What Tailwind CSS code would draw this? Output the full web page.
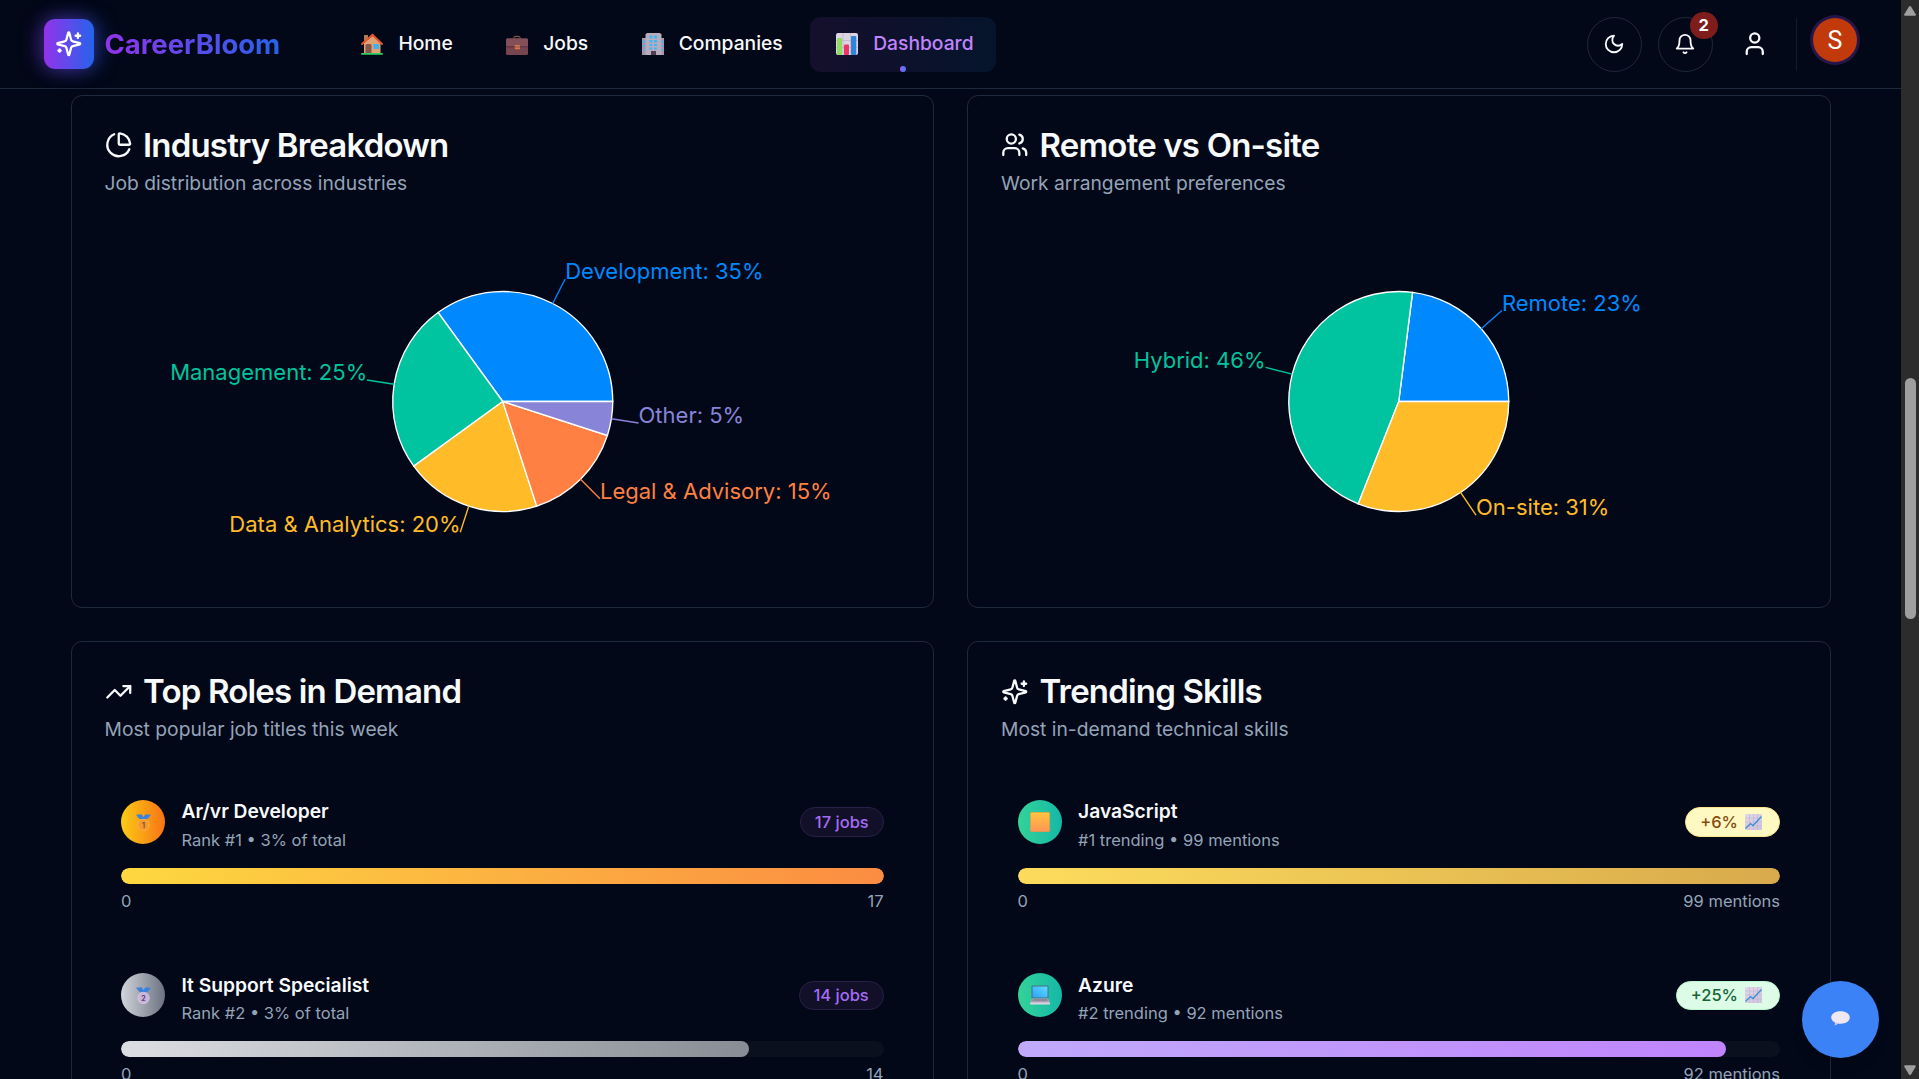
<!DOCTYPE html>
<html lang="en" class="text-[22px]">
<head>
<meta charset="utf-8">
<title>CareerBloom Dashboard</title>
<script src="https://cdn.jsdelivr.net/npm/@tailwindcss/browser@4"></script>
</head>
<body class="flex h-[1079px] w-[1919px] overflow-hidden bg-[#020817] font-['Inter',sans-serif] text-[#f8fafc]">

<svg class="absolute h-0 w-0">
  <defs>
    <symbol id="sparkles" viewBox="0 0 24 24"><path d="M9.937 15.5A2 2 0 0 0 8.5 14.063l-6.135-1.582a.5.5 0 0 1 0-.962L8.5 9.936A2 2 0 0 0 9.937 8.5l1.582-6.135a.5.5 0 0 1 .963 0L14.063 8.5A2 2 0 0 0 15.5 9.937l6.135 1.581a.5.5 0 0 1 0 .964L15.5 14.063a2 2 0 0 0-1.437 1.437l-1.582 6.135a.5.5 0 0 1-.963 0z"/><path d="M20 3v4"/><path d="M22 5h-4"/><path d="M4 17v2"/><path d="M5 18H3"/></symbol>
    <linearGradient id="paper" x1="0" y1="0" x2="1" y2="1"><stop offset="0" stop-color="#e0d9e8"/><stop offset="1" stop-color="#cfc2dc"/></linearGradient>
    <linearGradient id="orange" x1="0" y1="0" x2="0" y2="1"><stop offset="0" stop-color="#ffc63f"/><stop offset="1" stop-color="#ff9455"/></linearGradient>
    <linearGradient id="screen" x1="0" y1="1" x2="1" y2="0"><stop offset="0" stop-color="#2fa0f5"/><stop offset="1" stop-color="#5cdcff"/></linearGradient>
    <symbol id="chart-up" viewBox="0 0 17 16"><rect width="17" height="16" rx="1" fill="url(#paper)"/><path d="M4.500 0v16M8.500 0v16M12.500 0v16M0 4h17M0 8h17M0 12h17" stroke="#bdaecd" stroke-width=".5"/><path d="M.5 14.500 5.500 9.500 8 11.500 16.500 2.500" fill="none" stroke="#3b8fd6" stroke-width="1.300"/></symbol>
  </defs>
</svg>

<div class="flex w-[1901px] flex-col">
  <header class="flex h-[89px] shrink-0 items-center border-b border-[#1e293b] px-8">
    <div class="flex w-[291.4px] items-center gap-2">
      <div class="flex h-9 w-9 items-center justify-center rounded-lg bg-linear-to-r/srgb from-[#9333ea] to-[#2563eb] shadow-[-5px_0_20px_rgba(147,51,234,0.38),5px_0_20px_rgba(37,99,235,0.42)]">
        <svg class="h-5 w-5 fill-none stroke-white stroke-2" stroke-linecap="round" stroke-linejoin="round"><use href="#sparkles"/></svg>
      </div>
      <span class="bg-linear-to-r/srgb from-[#9333ea] to-[#2563eb] bg-clip-text text-xl font-bold text-transparent">CareerBloom</span>
    </div>
    <nav class="flex items-center gap-1 text-sm font-medium">
      <a class="flex h-10 items-center gap-2 px-4">
        <span class="flex w-[30px] justify-center"><svg class="h-[22px] w-[22px]" viewBox="0 0 22 22"><path d="M3 2h4v9H3z" fill="#b07a52"/><path d="M3 10 11.500 3 19.500 10V20.500H3z" fill="#dfa274"/><path d="M4.500 12.500q0-1.500 1.200-1.500h3.600q1.200 0 1.200 1.500V20.500h-6z" fill="#83564e"/><rect x="12.500" y="11" width="5.500" height="5" fill="#3fb2ee"/><path d="M1 11 11.500 1.800 21 11" fill="none" stroke="#e8562f" stroke-width="1.900" stroke-linecap="round"/><rect x="0" y="20" width="22" height="1.800" rx=".8" fill="#2fcf61"/></svg></span>
        <span>Home</span>
      </a>
      <a class="flex h-10 items-center gap-2 px-4">
        <span class="flex w-[30px] justify-center"><svg class="h-[22px] w-[22px]" viewBox="0 0 22 22"><path d="M8 6V4.500Q8 3.300 9.500 3.300h3q1.500 0 1.500 1.200V6" fill="none" stroke="#7d4a3c" stroke-width="1.200"/><rect x="0" y="5.500" width="22" height="16.500" rx="1.500" fill="#76454f"/><path d="M0 6.800Q0 5.500 1.500 5.500h19Q22 5.500 22 6.800V13.500H0z" fill="#83505a"/><path d="M0 13.800h22" stroke="#5a3040"/><rect x="8.800" y="12" width="5.200" height="4.200" rx=".6" fill="#d9774a"/><path d="M8.800 14h5.200" stroke="#76454f" stroke-width=".7"/></svg></span>
        <span>Jobs</span>
      </a>
      <a class="flex h-10 items-center gap-2 px-4">
        <span class="flex w-[30px] justify-center"><svg class="h-[22px] w-[22px]" viewBox="0 0 22 22"><path d="M0 5h4v17H0zM18 5h4v17h-4z" fill="#a597ad"/><path d="M3.500 1.500 5 0h13l1.500 1.500V22h-16z" fill="#b9acbd"/><path d="M1 7h2v3H1zM1 12h2v2H1zM1 16h2v2H1zM19.500 7h1.800v3h-1.800zM19.500 12h1.800v2h-1.800zM19.500 16h1.800v2h-1.800zM7.500 2.500h3v3h-3zM12 2.500h3v3h-3zM7.500 7h3v2.500h-3zM12 7h3v2.500h-3zM7.500 11h3v2h-3zM12 11h3v2h-3zM7.500 14.500h3v2h-3zM12 14.500h3v2h-3z" fill="#3db8f5"/><rect x="9" y="18" width="5" height="4" fill="#4c3d50"/></svg></span>
        <span>Companies</span>
      </a>
      <a class="relative flex h-10 items-center gap-2 rounded-lg bg-linear-to-r/srgb from-[#150f2c] to-[#05142c] px-4 text-[#c084fc]">
        <span class="flex w-[30px] justify-center"><svg class="h-[22px] w-[22px]" viewBox="0 0 22 22"><rect width="22" height="22" rx="2" fill="#ded5e2"/><path d="M7 0v22M14.500 0v22M0 7.500h22M0 14.500h22" stroke="#b9aabf" stroke-width=".6"/><rect x="1" y="5" width="5" height="17" rx="1" fill="#8fdc5e"/><rect x="8" y="11.500" width="5" height="10.500" rx="1" fill="#ea3563"/><rect x="15" y="3" width="5.300" height="19" rx="1" fill="#2d86da"/></svg></span>
        <span>Dashboard</span>
        <span class="absolute bottom-0 left-1/2 h-[6px] w-[6px] -translate-x-1/2 rounded-full bg-linear-to-r/srgb from-[#a855f7] to-[#3b82f6]"></span>
      </a>
    </nav>
    <div class="ml-auto flex items-center">
      <div class="flex h-10 w-10 items-center justify-center rounded-full border border-[#1e293b]">
        <svg class="mr-[1px] h-4 w-4 fill-none stroke-current stroke-2" viewBox="0 0 24 24" stroke-linecap="round" stroke-linejoin="round"><path d="M12 3a6 6 0 0 0 9 9 9 9 0 1 1-9-9Z"/></svg>
      </div>
      <div class="relative ml-[15.5px] flex h-10 w-10 items-center justify-center rounded-full border border-[#1e293b]">
        <svg class="h-4 w-4 fill-none stroke-current stroke-2" viewBox="0 0 24 24" stroke-linecap="round" stroke-linejoin="round"><path d="M6 8a6 6 0 0 1 12 0c0 7 3 9 3 9H3s3-2 3-9"/><path d="M10.300 21a1.940 1.940 0 0 0 3.400 0"/></svg>
        <span class="absolute -top-[6px] -right-[6px] flex h-5 w-5 items-center justify-center rounded-full bg-[#7f1d1d] text-xs font-bold">2</span>
      </div>
      <div class="ml-[14.75px] flex h-10 w-10 items-center justify-center">
        <svg class="h-5 w-5 fill-none stroke-current stroke-2" viewBox="0 0 24 24" stroke-linecap="round" stroke-linejoin="round"><path d="M19 21v-2a4 4 0 0 0-4-4H9a4 4 0 0 0-4 4v2"/><circle cx="12" cy="7" r="4"/></svg>
      </div>
      <div class="ml-2.5 h-[53px] w-px bg-[#131c2e]"></div>
      <div class="mb-[8px] ml-[16px] flex h-8 w-8 items-center justify-center rounded-full bg-[#c2390c] font-['Roboto'] text-[25px] font-normal leading-none text-white ring-[3px] ring-[#25164a]">S</div>
    </div>
  </header>

  <main class="mx-auto grid w-[1760px] grid-cols-2 gap-6 pt-[5.5px]">
    <section class="h-[513.5px] rounded-lg border border-[#1e293b] p-6">
      <h2 class="flex items-center gap-2 text-2xl leading-none font-semibold tracking-tight">
        <svg class="h-5 w-5 fill-none stroke-current stroke-2" viewBox="0 0 24 24" stroke-linecap="round" stroke-linejoin="round"><path d="M21 12c.552 0 1.005-.449.95-.998a10 10 0 0 0-8.953-8.951c-.55-.055-.998.398-.998.950v8a1 1 0 0 0 1 1z"/><path d="M21.210 15.890A10 10 0 1 1 8 2.830"/></svg>
        Industry Breakdown
      </h2>
      <p class="mt-1.5 text-sm text-[#94a3b8]">Job distribution across industries</p>
      <svg class="mt-[32.3px] h-[343px] w-full overflow-visible text-base" viewBox="-397.75 -171.5 795.5 343">
        <g stroke="#fff" stroke-width="1.375">
          <path fill="#0088FE" d="M0 0H110A110 110 0 0 0 -64.660 -88.990Z"/>
          <path fill="#00C49F" d="M0 0-64.660-88.990A110 110 0 0 0-88.990 64.660Z"/>
          <path fill="#FFBB28" d="M0 0-88.990 64.660A110 110 0 0 0 33.990 104.620Z"/>
          <path fill="#FF8042" d="M0 0 33.990 104.620A110 110 0 0 0 104.620 33.990Z"/>
          <path fill="#8884D8" d="M0 0 104.620 33.990A110 110 0 0 0 110 0Z"/>
        </g>
        <g fill="none" stroke-width="1.375">
          <path stroke="#0088FE" d="M49.940-98.010 62.420-122.510"/>
          <path stroke="#00C49F" d="M-108.650-17.210-135.810-21.510"/>
          <path stroke="#FFBB28" d="M-33.990 104.620-42.490 130.770"/>
          <path stroke="#FF8042" d="M77.780 77.780 97.230 97.230"/>
          <path stroke="#8884D8" d="M108.650 17.210 135.810 21.510"/>
        </g>
        <text x="62.420" y="-122.510" fill="#0088FE">Development: 35%</text>
        <text x="-135.500" y="-21.510" fill="#00C49F" text-anchor="end">Management: 25%</text>
        <text x="-42.200" y="130.770" fill="#FFBB28" text-anchor="end">Data &amp; Analytics: 20%</text>
        <text x="97.230" y="97.230" fill="#FF8042">Legal &amp; Advisory: 15%</text>
        <text x="135.810" y="21.510" fill="#8884D8">Other: 5%</text>
      </svg>
    </section>

    <section class="h-[513.5px] rounded-lg border border-[#1e293b] p-6">
      <h2 class="flex items-center gap-2 text-2xl leading-none font-semibold tracking-tight">
        <svg class="h-5 w-5 fill-none stroke-current stroke-2" viewBox="0 0 24 24" stroke-linecap="round" stroke-linejoin="round"><path d="M16 21v-2a4 4 0 0 0-4-4H6a4 4 0 0 0-4 4v2"/><circle cx="9" cy="7" r="4"/><path d="M22 21v-2a4 4 0 0 0-3-3.870"/><path d="M16 3.130a4 4 0 0 1 0 7.750"/></svg>
        Remote vs On-site
      </h2>
      <p class="mt-1.5 text-sm text-[#94a3b8]">Work arrangement preferences</p>
      <svg class="mt-[32.3px] h-[343px] w-full overflow-visible text-base" viewBox="-397.75 -171.5 795.5 343">
        <g stroke="#fff" stroke-width="1.375">
          <path fill="#0088FE" d="M0 0H110A110 110 0 0 0 13.790-109.130Z"/>
          <path fill="#00C49F" d="M0 0 13.790-109.130A110 110 0 0 0-40.490 102.270Z"/>
          <path fill="#FFBB28" d="M0 0-40.490 102.270A110 110 0 0 0 110 0Z"/>
        </g>
        <g fill="none" stroke-width="1.375">
          <path stroke="#0088FE" d="M82.510-72.740 103.140-90.930"/>
          <path stroke="#00C49F" d="M-106.540-27.360-133.180-34.190"/>
          <path stroke="#FFBB28" d="M61.830 90.980 77.290 113.720"/>
        </g>
        <text x="103.140" y="-90.930" fill="#0088FE">Remote: 23%</text>
        <text x="-133.180" y="-34" fill="#00C49F" text-anchor="end">Hybrid: 46%</text>
        <text x="77.290" y="113.720" fill="#FFBB28">On-site: 31%</text>
      </svg>
    </section>

    <section class="h-[600px] rounded-lg border border-[#1e293b] p-6">
      <h2 class="flex items-center gap-2 text-2xl leading-none font-semibold tracking-tight">
        <svg class="h-5 w-5 fill-none stroke-current stroke-2" viewBox="0 0 24 24" stroke-linecap="round" stroke-linejoin="round"><path d="M22 7 13.500 15.500 8.500 10.500 2 17"/><path d="M16 7h6v6"/></svg>
        Top Roles in Demand
      </h2>
      <p class="mt-1.5 text-sm text-[#94a3b8]">Most popular job titles this week</p>
      <div class="mt-6 flex flex-col gap-4">
        <div class="p-3">
          <div class="flex items-center gap-3">
            <div class="flex h-8 w-8 items-center justify-center rounded-full bg-linear-to-r/srgb from-[#facc15] to-[#f97316]">
              <svg class="h-[17px] w-[15px]" viewBox="0 0 15 17"><path d="M0 .8 5.500.3 7.500 3 9.500.3 15 .8 12 4.500 8.500 6h-2L3 4.500z" fill="#3b82dc"/><circle cx="7.500" cy="11" r="5.700" fill="#f39a2d" stroke="#f7b55a" stroke-width=".8"/><text x="7.500" y="13.500" text-anchor="middle" class="text-[7px] font-bold" fill="#8a4b35">1</text></svg>
            </div>
            <div class="flex-1"><h4 class="pt-[2px] text-sm leading-[33px] font-semibold">Ar/vr Developer</h4><p class="mt-[0.75px] text-xs text-[#94a3b8]">Rank #1 • 3% of total</p></div>
            <span class="rounded-full border border-[#292048] bg-[#120f29] px-2.5 py-0.5 text-xs font-medium text-[#a46cf5]">17 jobs</span>
          </div>
          <div class="mt-3 h-3 overflow-hidden rounded-full bg-[#0b101e]"><div class="h-full rounded-full bg-linear-to-r/srgb from-[#fdd840] to-[#fb8c42]" style="width:100%"></div></div>
          <div class="mt-1 flex justify-between text-xs text-[#94a3b8]"><span>0</span><span>17</span></div>
        </div>
        <div class="p-3">
          <div class="flex items-center gap-3">
            <div class="flex h-8 w-8 items-center justify-center rounded-full bg-linear-to-r/srgb from-[#d1d5db] to-[#6b7280]">
              <svg class="h-[17px] w-[15px]" viewBox="0 0 15 17"><path d="M0 .8 5.500.3 7.500 3 9.500.3 15 .8 12 4.500 8.500 6h-2L3 4.500z" fill="#3b82dc"/><circle cx="7.500" cy="11" r="5.700" fill="#cbb5dc" stroke="#dccbe8" stroke-width=".8"/><text x="7.500" y="13.500" text-anchor="middle" class="text-[7px] font-bold" fill="#54456a">2</text></svg>
            </div>
            <div class="flex-1"><h4 class="pt-[2px] text-sm leading-[33px] font-semibold">It Support Specialist</h4><p class="mt-[0.75px] text-xs text-[#94a3b8]">Rank #2 • 3% of total</p></div>
            <span class="rounded-full border border-[#292048] bg-[#120f29] px-2.5 py-0.5 text-xs font-medium text-[#a46cf5]">14 jobs</span>
          </div>
          <div class="mt-3 h-3 overflow-hidden rounded-full bg-[#0b101e]"><div class="h-full rounded-full bg-linear-to-r/srgb from-[#dcdee2] to-[#888c94]" style="width:82.35%"></div></div>
          <div class="mt-1 flex justify-between text-xs text-[#94a3b8]"><span>0</span><span>14</span></div>
        </div>
      </div>
    </section>

    <section class="h-[600px] rounded-lg border border-[#1e293b] p-6">
      <h2 class="flex items-center gap-2 text-2xl leading-none font-semibold tracking-tight">
        <svg class="h-5 w-5 fill-none stroke-current stroke-2" stroke-linecap="round" stroke-linejoin="round"><use href="#sparkles"/></svg>
        Trending Skills
      </h2>
      <p class="mt-1.5 text-sm text-[#94a3b8]">Most in-demand technical skills</p>
      <div class="mt-6 flex flex-col gap-4">
        <div class="p-3">
          <div class="flex items-center gap-3">
            <div class="flex h-8 w-8 items-center justify-center rounded-full bg-linear-to-r/srgb from-[#34d399] to-[#14b8a6]">
              <svg class="mb-[1px] h-[20px] w-[20px]" viewBox="0 0 20 20"><rect x=".3" y=".3" width="19.400" height="19.400" rx="1.500" fill="url(#orange)" stroke="#ef9140" stroke-width=".6"/></svg>
            </div>
            <div class="flex-1"><h4 class="pt-[2px] text-sm leading-[33px] font-semibold">JavaScript</h4><p class="mt-[0.75px] text-xs text-[#94a3b8]">#1 trending • 99 mentions</p></div>
            <span class="flex items-center rounded-full border border-[#fde68a] bg-[#fef9c3] py-0.5 pr-[17px] pl-2.5 text-xs font-medium text-[#854d0e]">+6%<svg class="ml-[7px] h-[16px] w-[17px]"><use href="#chart-up"/></svg></span>
          </div>
          <div class="mt-3 h-3 overflow-hidden rounded-full bg-[#0b101e]"><div class="h-full rounded-full bg-linear-to-r/srgb from-[#fddc5c] to-[#d8aa4c]" style="width:100%"></div></div>
          <div class="mt-1 flex justify-between text-xs text-[#94a3b8]"><span>0</span><span>99 mentions</span></div>
        </div>
        <div class="p-3">
          <div class="flex items-center gap-3">
            <div class="flex h-8 w-8 items-center justify-center rounded-full bg-linear-to-r/srgb from-[#34d399] to-[#14b8a6]">
              <svg class="h-[20px] w-[20px]" viewBox="0 0 20 20"><rect x="1.500" y=".5" width="17" height="13" rx="1" fill="#4a6c88"/><rect x="2.500" y="1.500" width="15" height="11" fill="url(#screen)"/><path d="M2 13.500h16l2 4.500H0z" fill="#a9a5b6"/><path d="M3 14.300h14l.7 1.500H2.300z" fill="#837f94"/><path d="M0 17.500h20v1.200q0 .8-.8.8H.8q-.8 0-.8-.8z" fill="#ddd4e2"/></svg>
            </div>
            <div class="flex-1"><h4 class="pt-[2px] text-sm leading-[33px] font-semibold">Azure</h4><p class="mt-[0.75px] text-xs text-[#94a3b8]">#2 trending • 92 mentions</p></div>
            <span class="flex items-center rounded-full border border-[#bbf7d0] bg-[#dcfce7] py-0.5 pr-[17px] pl-2.5 text-xs font-medium text-[#166534]">+25%<svg class="ml-[7px] h-[16px] w-[17px]"><use href="#chart-up"/></svg></span>
          </div>
          <div class="mt-3 h-3 overflow-hidden rounded-full bg-[#0b101e]"><div class="h-full rounded-full bg-linear-to-r/srgb from-[#c0a9fb] to-[#c084fc]" style="width:92.93%"></div></div>
          <div class="mt-1 flex justify-between text-xs text-[#94a3b8]"><span>0</span><span>92 mentions</span></div>
        </div>
      </div>
    </section>
  </main>
</div>

<!-- scrollbar -->
<div class="flex w-[18px] flex-col items-center bg-[#2c2c2c]">
  <svg class="mt-[5px] h-[12px] w-[14px]" viewBox="0 0 14 12"><path d="M6 1.500Q7 .3 8 1.500L12.700 9.200Q13.200 10.700 12 10.700H2Q.8 10.700 1.300 9.200Z" fill="#9f9f9f"/></svg>
  <div class="mt-[361px] ml-[1px] h-[241px] w-[11px] rounded-full bg-[#9f9f9f]"></div>
  <svg class="mt-auto mb-[3px] h-[12px] w-[14px]" viewBox="0 0 14 12"><path d="M6 10.500Q7 11.700 8 10.500L12.700 2.800Q13.200 1.300 12 1.300H2Q.8 1.300 1.300 2.800Z" fill="#9f9f9f"/></svg>
</div>

<!-- chat button -->
<div class="fixed right-[40px] bottom-[21px] flex h-14 w-14 items-center justify-center rounded-full bg-[#3b82f6] shadow-lg">
  <svg class="mb-[2px] h-[15px] w-[19px]" viewBox="0 0 19 15"><path d="M9.500.3C14.800.3 18.800 3 18.800 6.500S14.800 12.700 9.500 12.700q-1.500 0-2.800-.3Q5.500 14 3.700 14.300 4.300 13 4 11.500C1.600 10.300.2 8.600.2 6.500.2 3 4.200.3 9.500.3Z" fill="#efe8f3"/><path d="M1 8.500Q3.500 12 8.500 12q-1 .7-1.800.4Q5.500 14 3.700 14.300 4.300 13 4 11.500 1.800 10.500 1 8.500Z" fill="#d5c4df"/></svg>
</div>
</body>
</html>
